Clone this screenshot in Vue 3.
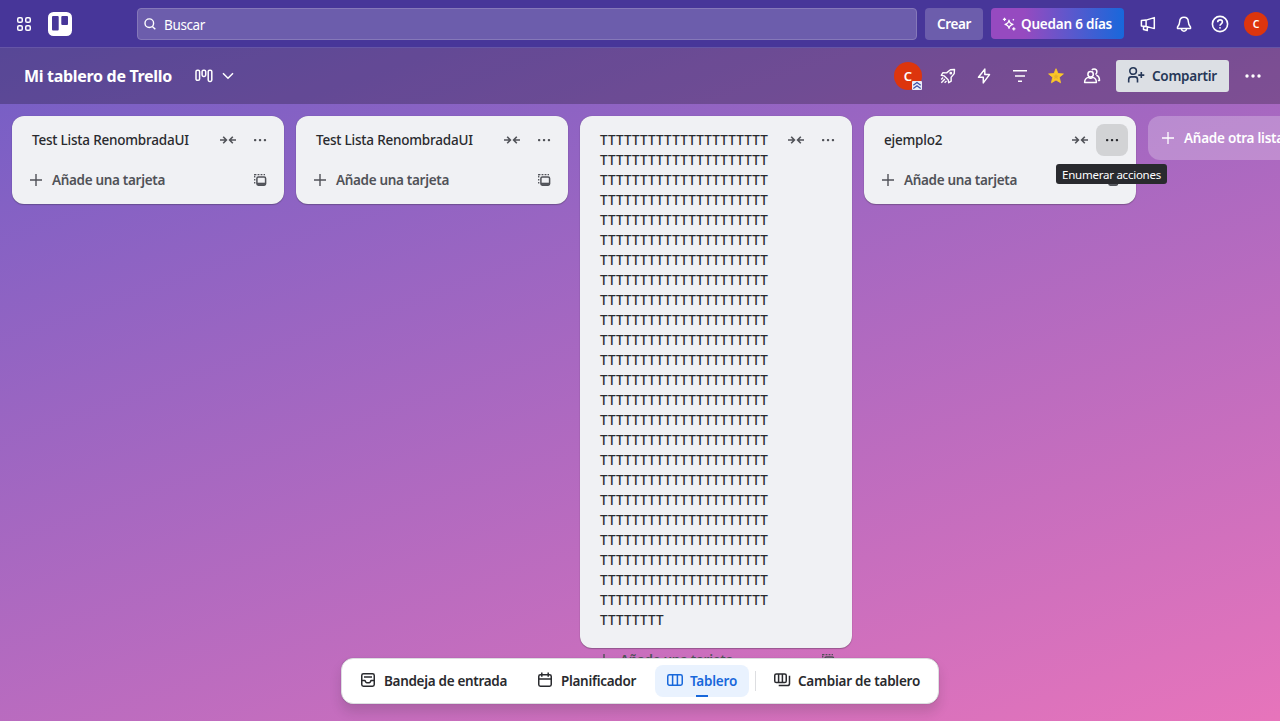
<script setup>
const lists = [
  { name: 'Test Lista RenombradaUI' },
  { name: 'Test Lista RenombradaUI' },
  { name: 'T'.repeat(21 * 24 + 8), long: true },
  { name: 'ejemplo2', hovered: true },
]
</script>

<template>
  <div class="page">
    <header class="topbar">
      <svg class="apps" width="16" height="16" viewBox="0 0 16 16"><g fill="none" stroke="currentColor" stroke-width="1.5"><rect x="1.75" y="1.75" width="4.5" height="4.5" rx="1.3"/><rect x="9.75" y="1.75" width="4.5" height="4.5" rx="1.3"/><rect x="1.75" y="9.75" width="4.5" height="4.5" rx="1.3"/><rect x="9.75" y="9.75" width="4.5" height="4.5" rx="1.3"/></g></svg>
      <svg class="logo" width="24" height="24" viewBox="0 0 24 24"><rect width="24" height="24" rx="5.5" fill="#fff"/><rect x="4" y="4" width="6.7" height="14.5" rx="1" fill="#473699"/><rect x="13.3" y="4" width="6.7" height="9" rx="1" fill="#473699"/></svg>
      <div class="search">
        <svg width="16" height="16" viewBox="0 0 16 16" fill="none" stroke="currentColor" stroke-width="1.4"><circle cx="7.3" cy="7.2" r="4.3"/><path d="M10.4 10.4 13.3 13.3"/></svg>
        <span>Buscar</span>
      </div>
      <button class="create"><span>Crear</span></button>
      <button class="trial">
        <svg width="14" height="14" viewBox="0 0 14 14" fill="none" stroke="currentColor" stroke-width="1.2" stroke-linejoin="round"><path d="M7 3.2Q7.6 6.8 11 7.3Q7.6 7.9 7 11.4Q6.4 7.9 3 7.3Q6.4 6.8 7 3.2Z"/><path d="M2.5 .8V4M.9 2.4H4.1M11.8 10.2V13.4M10.2 11.8H13.4M10.8 3.2 11.9 2.2"/></svg>
        <span>Quedan 6 días</span>
      </button>
      <div class="top-icons">
        <div class="ib"><svg width="16" height="16" viewBox="0 0 16 16" fill="none" stroke="currentColor" stroke-width="1.5" stroke-linejoin="round"><path d="M1.4 4.6 6.1 4.1 14.3 1.6V12.6L6.1 10.4 1.4 9.9ZM6.1 4.1V10.4M3.5 10.3V13.6L7.3 14.5V11"/></svg></div>
        <div class="ib"><svg width="16" height="16" viewBox="0 0 16 16" fill="none" stroke="currentColor" stroke-width="1.5" stroke-linejoin="round"><path d="M8 1.2C5.4 1.2 3.8 3 3.7 5.5C3.6 8.1 3.1 9.4 1.5 11V12.4H14.5V11C12.9 9.4 12.4 8.1 12.3 5.5C12.2 3 10.6 1.2 8 1.2Z"/><path d="M5.3 12.5C5.6 14.3 6.6 15.2 8 15.2S10.4 14.3 10.7 12.5"/></svg></div>
        <div class="ib"><svg width="18" height="18" viewBox="0 0 18 18" fill="none" stroke="currentColor" stroke-width="1.6"><circle cx="9" cy="9" r="7.6"/><path d="M6.7 7.2C6.7 5.7 7.7 4.9 9.1 4.9S11.4 5.7 11.4 7C11.4 8.9 9 8.7 9 10.8"/><circle cx="9" cy="12.8" r=".9" fill="currentColor" stroke="none"/></svg></div>
        <div class="ib"><span class="avatar small">C</span></div>
      </div>
    </header>

    <section class="boardbar">
      <h1>Mi tablero de Trello</h1>
      <svg class="views" width="18" height="14" viewBox="0 0 18 14" fill="none" stroke="currentColor" stroke-width="1.5"><rect x="1" y="1.2" width="3.6" height="10.1" rx="1.4"/><rect x="7.1" y="1.2" width="3.6" height="6.2" rx="1.4"/><rect x="13.2" y="1.2" width="3.6" height="11.2" rx="1.4"/></svg>
      <svg class="chev" width="12" height="8" viewBox="0 0 12 8" fill="none" stroke="currentColor" stroke-width="1.5"><path d="M1 1.2 6 6.3 11 1.2"/></svg>
      <div class="member">
        <span class="avatar">C</span>
        <svg class="badge" width="10" height="9" viewBox="0 0 10 9"><rect width="10" height="9" rx="1" fill="#e9edf8"/><path d="M1.3 4.2 5 1.4 8.7 4.2M1.3 7.6 5 4.8 8.7 7.6" fill="none" stroke="#3f51a8" stroke-width="1.2"/></svg>
      </div>
      <div class="board-icons">
        <div class="ib"><svg width="16" height="16" viewBox="0 0 16 16" fill="none" stroke="currentColor" stroke-width="1.4" stroke-linejoin="round"><path d="M14.5 1.5 10.4 1.8 6.6 4.9 2.8 4.8 1.3 7.3 4.3 7.9 8.1 11.7 8.7 14.7 11.2 13.2 11.1 9.4 14.2 5.6Z"/><path d="M1.3 14.7 4.9 11.1M1.2 11.4 3.1 9.5M4.6 14.8 6.5 12.9"/><circle cx="10.8" cy="5.2" r=".7"/></svg></div>
        <div class="ib"><svg width="16" height="16" viewBox="0 0 16 16" fill="none" stroke="currentColor" stroke-width="1.5" stroke-linejoin="round"><path d="M8.8 1.1 2.5 9.3H7.3V14.9L13.5 6.6H8.8Z"/></svg></div>
        <div class="ib"><svg width="16" height="16" viewBox="0 0 16 16" fill="none" stroke="currentColor" stroke-width="1.5"><path d="M1 2.7H15M3 8H13M6 13.2H10"/></svg></div>
        <div class="ib"><svg width="18" height="18" viewBox="0 0 18 18"><path d="M9 1.7 11 6.5 16.4 6.9 12.3 10.3 13.6 15.8 9 13 4.4 15.8 5.7 10.3 1.6 6.9 7 6.5Z" fill="#fbc828" stroke="#fbc828" stroke-width=".8" stroke-linejoin="round"/><path d="M9 6.5 9.8 8.5 12 8.7 10.3 10 10.9 12.2 9 11 7.1 12.2 7.7 10 6 8.7 8.2 8.5Z" fill="#e5b02c"/></svg></div>
        <div class="ib"><svg width="18" height="16" viewBox="0 0 18 16" fill="none" stroke="currentColor" stroke-width="1.5" stroke-linejoin="round"><circle cx="7.6" cy="6.2" r="2.7"/><path d="M1.6 14.5C1.6 11.6 3.2 10 5.4 9.4C6.6 10.2 8.6 10.2 9.8 9.4C12 10 13.4 11.6 13.4 14.5Z"/><path d="M8.9 2.1C9.4 1.3 10.2 1 11.1 1C12.8 1 13.9 2.3 13.9 3.8C13.9 5 13.3 5.9 12.4 6.5M13.3 7.2C15.3 7.8 16.5 9.6 16.5 12.5H14.9"/></svg></div>
      </div>
      <button class="share">
        <svg width="18" height="18" viewBox="0 0 18 18" fill="none" stroke="currentColor" stroke-width="1.6"><circle cx="6.1" cy="5" r="3.3"/><path d="M1.7 16.6V13.5C1.7 11.8 2.7 10.9 4.2 10.9H8C9.6 10.9 10.5 11.8 10.5 13.5V16.6M14.3 6.1V12.1M11.3 9.1H17.3"/></svg>
        <span>Compartir</span>
      </button>
      <svg class="more" width="16" height="4" viewBox="0 0 16 4" fill="currentColor"><circle cx="2" cy="2" r="1.7"/><circle cx="8" cy="2" r="1.7"/><circle cx="14" cy="2" r="1.7"/></svg>
    </section>

    <main class="lists">
      <article v-for="(list, i) in lists" :key="i" class="list" :class="{ tall: list.long }">
        <div class="list-head">
          <h2>{{ list.name }}</h2>
          <div class="lb"><svg width="16" height="10" viewBox="0 0 16 10" fill="none" stroke="currentColor" stroke-width="1.6"><path d="M0 5H6M3.2 1.7 6.4 5 3.2 8.3M16 5H10M12.8 1.7 9.6 5 12.8 8.3"/></svg></div>
          <div class="lb" :class="{ hovered: list.hovered }"><svg width="14" height="4" viewBox="0 0 14 4" fill="currentColor"><rect x="1" y="1" width="2.3" height="2.3" rx=".8"/><rect x="5.9" y="1" width="2.3" height="2.3" rx=".8"/><rect x="10.8" y="1" width="2.3" height="2.3" rx=".8"/></svg></div>
          <div v-if="list.hovered" class="tooltip"><span>Enumerar acciones</span></div>
        </div>
        <div class="list-foot">
          <svg class="plus" width="12" height="12" viewBox="0 0 12 12" fill="none" stroke="currentColor" stroke-width="1.4"><path d="M6 0V12M0 6H12"/></svg>
          <span>Añade una tarjeta</span>
          <svg class="tpl" width="14" height="14" viewBox="0 0 14 14" fill="none" stroke="currentColor" stroke-width="1.5"><path d="M1.7 10.6V9M1.7 7.6V6M1.7 4.6V3M1.7 2.4V1.6H3.4M4.6 1.6H6.4M7.6 1.6H9.4M10.6 1.6H12" stroke-width="1.3"/><rect x="3.9" y="4" width="8.7" height="8.2" rx="1.4"/><path d="M4 10.8H12.4" stroke-width="2.2"/></svg>
        </div>
      </article>
      <button class="add-list">
        <svg width="12" height="12" viewBox="0 0 12 12" fill="none" stroke="currentColor" stroke-width="1.3"><path d="M6 0V12M0 6H12"/></svg>
        <span>Añade otra lista</span>
      </button>
    </main>

    <nav class="dock">
      <div class="tab">
        <svg width="16" height="16" viewBox="0 0 16 16" fill="none" stroke="currentColor" stroke-width="1.5"><rect x="1.75" y="1.75" width="12.5" height="12.5" rx="1.7"/><path d="M4 5H12M2 8.6H4.8C5.4 8.6 5.5 10.8 6.7 10.8H9.3C10.5 10.8 10.6 8.6 11.2 8.6H14"/></svg>
        <span class="t1">Bandeja de entrada</span>
      </div>
      <div class="tab plan">
        <svg width="16" height="16" viewBox="0 0 16 16" fill="none" stroke="currentColor" stroke-width="1.5"><rect x="1.75" y="2.75" width="12.5" height="11.5" rx="1.7"/><path d="M2 7H14M4.8 .5V4.8M11.2 .5V4.8"/></svg>
        <span class="t2">Planificador</span>
      </div>
      <div class="tab active">
        <svg width="16" height="14" viewBox="0 0 16 14" fill="none" stroke="currentColor" stroke-width="1.5"><rect x=".75" y="1.75" width="14.5" height="10.5" rx="1.7"/><path d="M5.6 2V12M10.4 2V12"/></svg>
        <span class="t3">Tablero</span>
        <i class="mark"></i>
      </div>
      <i class="sep"></i>
      <div class="tab switch">
        <svg width="17" height="14" viewBox="0 0 17 14" fill="none" stroke="currentColor" stroke-width="1.5"><rect x=".75" y="1" width="11.5" height="8.5" rx="1.6"/><path d="M4.6 1V9.5M8.4 1V9.5M15.5 2.7V10.4C15.5 11.7 14.8 12.5 13.4 12.5H4.7"/></svg>
        <span class="t4">Cambiar de tablero</span>
      </div>
    </nav>
  </div>
</template>

<style>
body { overflow: hidden; }
</style>

<style scoped>
* { box-sizing: border-box; }
.page {
  position: relative;
  height: 721px;
  overflow: hidden;
  display: flex;
  flex-direction: column;
  font: 600 13.5px/20px "Noto Sans", "Open Sans", sans-serif;
  color: #292a2e;
  background: linear-gradient(161deg, #6e5dc6, #e774bb);
}
svg { display: block; flex: none; }
button { font: inherit; border: 0; padding: 0; display: flex; align-items: center; flex: none; }
span { white-space: nowrap; }

.topbar {
  flex: none;
  height: 48px;
  display: flex;
  align-items: flex-start;
  padding: 8px 8px 0 16px;
  background: #473699;
  border-bottom: 1px solid #6555a6;
  color: #fff;
}
.apps { margin-top: 8px; }
.logo { margin: 4px 65px 0 16px; }
.search {
  width: 780px;
  height: 32px;
  display: flex;
  align-items: center;
  gap: 6px;
  padding: 0 4px;
  border: 1px solid #8578b9;
  border-radius: 4px;
  background: #6c5dac;
  font-weight: 400;
  letter-spacing: -.37px;
}
.search span { padding-top: 2px; }
.create {
  width: 58px;
  height: 32px;
  margin-left: 8px;
  justify-content: center;
  border-radius: 4px;
  background: #6c5dac;
  color: #fff;
  letter-spacing: -.38px;
}
.trial {
  width: 133px;
  height: 31px;
  margin-left: 8px;
  padding-left: 11px;
  gap: 5px;
  border-radius: 4px;
  background: linear-gradient(90deg, #964ac0 25%, #1868db);
  color: #fff;
  letter-spacing: -.2px;
}
.trial span { padding-top: 1px; }
.top-icons { display: flex; gap: 4px; margin-left: 8px; }
.ib { width: 32px; height: 32px; display: flex; align-items: center; justify-content: center; flex: none; }
.avatar {
  width: 28px;
  height: 28px;
  border-radius: 50%;
  display: flex;
  align-items: center;
  justify-content: center;
  background: #dd350d;
  color: #fff;
  font-size: 13px;
}
.avatar.small { width: 24px; height: 24px; font-size: 10.5px; }

.boardbar {
  flex: none;
  height: 56px;
  display: flex;
  align-items: center;
  padding: 0 19px 0 24px;
  background: rgba(0, 0, 0, .24);
  color: #fff;
}
h1 { margin: 0; width: 148px; white-space: nowrap; font-size: 16px; font-weight: 700; letter-spacing: -.31px; }
.views { margin-left: 23px; }
.chev { margin-left: 9px; }
.member { position: relative; margin-left: auto; margin-right: 10px; }
.badge { position: absolute; right: 0; bottom: 0; }
.board-icons { display: flex; gap: 4px; }
.share {
  width: 113px;
  height: 32px;
  margin-left: 8px;
  padding-left: 11px;
  gap: 7px;
  border-radius: 3px;
  background: #dcdfe4;
  color: #263757;
  letter-spacing: -.26px;
}
.share svg { margin-top: -3px; }
.more { margin-left: 16px; }

.lists {
  flex: 1;
  min-height: 0;
  display: flex;
  align-items: flex-start;
  gap: 12px;
  padding: 12px;
}
.list {
  flex: none;
  width: 272px;
  height: 88px;
  padding: 8px;
  border-radius: 12px;
  background: #f0f1f4;
  box-shadow: 0 1px 1px rgba(30, 31, 33, .28), 0 0 1px rgba(30, 31, 33, .3);
}
.list.tall { height: 532px; }
.list-head { position: relative; display: flex; align-items: flex-start; margin-bottom: 8px; }
h2 {
  flex: 1;
  min-width: 0;
  margin: 0;
  padding: 6px 8px 6px 12px;
  font-size: 13.5px;
  font-weight: 500;
  line-height: 20px;
  letter-spacing: -.21px;
  overflow-wrap: anywhere;
}
.tall h2 { letter-spacing: .157px; }
.lb {
  width: 32px;
  height: 32px;
  display: flex;
  align-items: center;
  justify-content: center;
  border-radius: 8px;
  color: #505258;
}
.lb.hovered { background: #d2d3d5; color: #292a2e; }
.tooltip {
  position: absolute;
  z-index: 2;
  left: 184px;
  top: 40px;
  width: 111px;
  height: 20px;
  border-radius: 3px;
  background: #292a2e;
  color: #fff;
  display: flex;
  align-items: center;
  padding: 2px 0 0 6px;
  font-size: 11.5px;
  font-weight: 400;
  letter-spacing: -.24px;
}
.list-foot {
  height: 32px;
  display: flex;
  align-items: center;
  gap: 10px;
  padding: 0 9px 0 10px;
  color: #505258;
  letter-spacing: -.32px;
}
.tpl { margin-left: auto; }
.add-list {
  width: 272px;
  height: 44px;
  padding-left: 14px;
  gap: 10px;
  border-radius: 12px;
  background: rgba(255, 255, 255, .24);
  color: #fff;
  letter-spacing: -.25px;
}

.dock {
  position: absolute;
  z-index: 3;
  left: 341px;
  top: 658px;
  width: 598px;
  height: 46px;
  display: flex;
  align-items: center;
  padding: 0 6px;
  border: 1px solid #dddee1;
  border-radius: 12px;
  background: #fff;
  box-shadow: 0 8px 12px rgba(30, 31, 33, .15), 0 0 1px rgba(30, 31, 33, .3);
}
.tab {
  position: relative;
  height: 32px;
  display: flex;
  align-items: center;
  gap: 8px;
  padding-left: 12px;
  border-radius: 8px;
  width: 171px;
}
.tab svg { margin-top: -2px; }
.tab.plan { width: 112px; margin-left: 6px; }
.tab.active { width: 94px; margin-left: 18px; background: #e9f2fe; color: #1868db; gap: 7px; }
.tab.switch { width: 166px; gap: 7px; }
.mark { position: absolute; left: 41px; bottom: 0; width: 12px; height: 2px; background: #1868db; }
.sep { width: 1px; height: 20px; margin: 0 6px; background: #dddee1; }
.t1 { letter-spacing: -.31px; }
.t2 { letter-spacing: -.3px; }
.t3 { letter-spacing: -.23px; }
.t4 { letter-spacing: -.24px; }
</style>
